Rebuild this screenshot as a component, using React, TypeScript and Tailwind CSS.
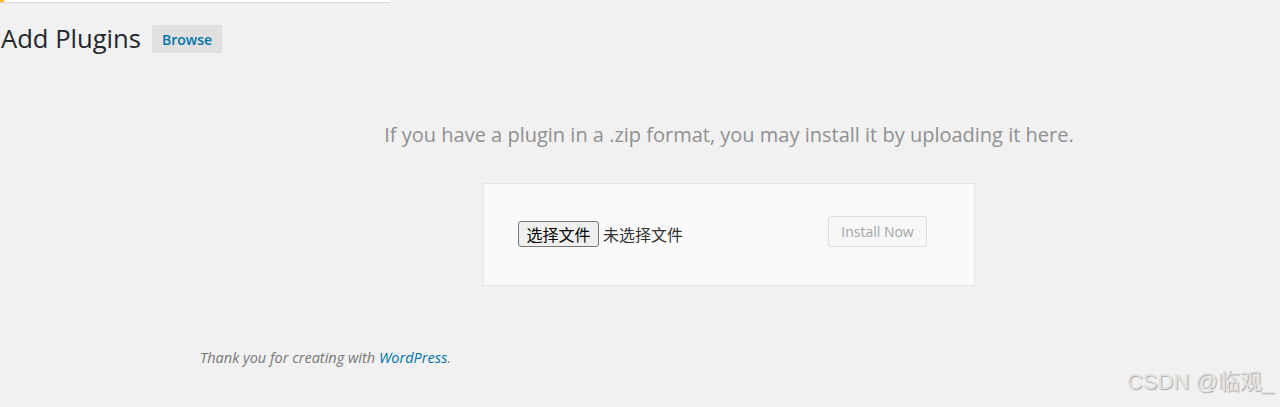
import React from 'react';

const sans = { fontFamily: '"Open Sans", "Noto Sans", sans-serif' };
const cjk = { fontFamily: '"Noto Sans CJK SC", "Noto Sans", sans-serif' };

const UploadForm: React.FC = () => {
  return (
    <div className="mx-auto w-[492px] h-[103.5px] bg-[#fafafa] border border-[#e5e5e5] flex items-center justify-between pl-[34px] pr-[47px]">
      <div className="flex items-center gap-[4px]" style={cjk}>
        <button className="h-[26px] w-[81px] text-[16px] leading-none text-black bg-[#efefef] border border-[#767676] rounded-[3px]">
          选择文件
        </button>
        <span className="text-[16px] text-[#333]">未选择文件</span>
      </div>
      <button
        disabled
        className="h-[31px] w-[99px] mb-[5px] text-[14px] text-[#a0a5aa] bg-[#f7f7f7] border border-[#dddddd] rounded-[3px]"
        style={sans}
      >
        Install Now
      </button>
    </div>
  );
};

export default function App() {
  return (
    <div className="relative w-[1280px] h-[407px] overflow-hidden bg-[#f1f1f1]" style={sans}>
      <div className="w-[390px] h-[2px] bg-white border-l-4 border-[#ffb900] shadow-[0_1px_1px_rgba(0,0,0,0.12)]" />

      <div className="flex items-center gap-[11px] pl-[1px] mt-[22px]">
        <h1 className="text-[25.6px] leading-[30px] font-normal text-[#23282d]">Add Plugins</h1>
        <span className="h-[28px] px-[10px] flex items-center text-[14px] font-semibold text-[#0073aa] bg-[#e0e0e0] rounded-[2px]">
          Browse
        </span>
      </div>

      <div className="pl-[178px] text-center">
        <p className="mt-[67px] text-[20px] leading-[28px] text-[#909090]">
          If you have a plugin in a .zip format, you may install it by uploading it here.
        </p>
        <div className="mt-[33.5px]">
          <UploadForm />
        </div>
      </div>

      <p className="mt-[61px] pl-[200px] text-[14.5px] italic text-[#777]">
        Thank you for creating with <span className="text-[#0073aa]">WordPress</span>.
      </p>

      <div
        className="absolute right-[6px] bottom-[9px] text-[22px] text-[#e2e2e2] [text-shadow:1px_1px_1px_rgba(0,0,0,0.3)]"
        style={{ fontFamily: '"Liberation Sans", "Noto Sans CJK SC", sans-serif' }}
      >
        CSDN @临观_
      </div>
    </div>
  );
}
